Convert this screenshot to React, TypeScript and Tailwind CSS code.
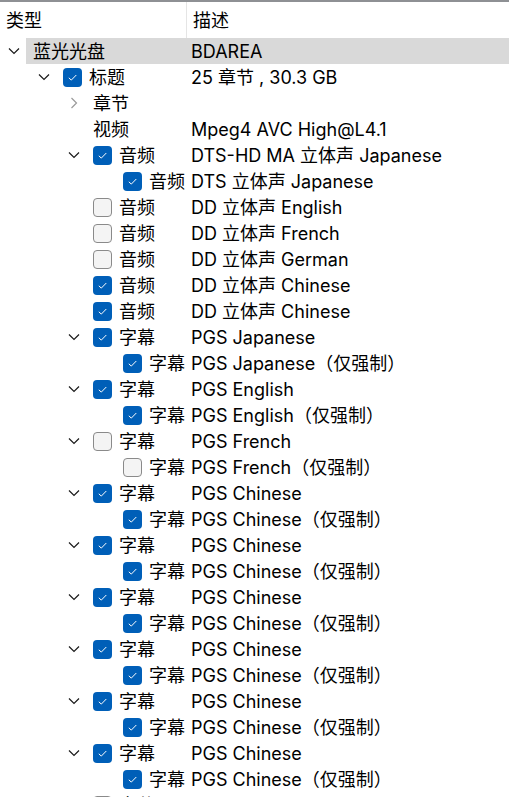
import React from "react";

type Row = {
  level: number;
  chev?: "down" | "right";
  cb?: "on" | "off";
  label: string;
  desc: string;
  hl?: boolean;
};

const rows: Row[] = [
  { level: 0, chev: "down", label: "蓝光光盘", desc: "BDAREA", hl: true },
  { level: 1, chev: "down", cb: "on", label: "标题", desc: "25 章节 , 30.3 GB" },
  { level: 2, chev: "right", label: "章节", desc: "" },
  { level: 2, label: "视频", desc: "Mpeg4 AVC High@L4.1" },
  { level: 2, chev: "down", cb: "on", label: "音频", desc: "DTS-HD MA 立体声 Japanese" },
  { level: 3, cb: "on", label: "音频", desc: "DTS 立体声 Japanese" },
  { level: 2, cb: "off", label: "音频", desc: "DD 立体声 English" },
  { level: 2, cb: "off", label: "音频", desc: "DD 立体声 French" },
  { level: 2, cb: "off", label: "音频", desc: "DD 立体声 German" },
  { level: 2, cb: "on", label: "音频", desc: "DD 立体声 Chinese" },
  { level: 2, cb: "on", label: "音频", desc: "DD 立体声 Chinese" },
  { level: 2, chev: "down", cb: "on", label: "字幕", desc: "PGS Japanese" },
  { level: 3, cb: "on", label: "字幕", desc: "PGS Japanese（仅强制）" },
  { level: 2, chev: "down", cb: "on", label: "字幕", desc: "PGS English" },
  { level: 3, cb: "on", label: "字幕", desc: "PGS English（仅强制）" },
  { level: 2, chev: "down", cb: "off", label: "字幕", desc: "PGS French" },
  { level: 3, cb: "off", label: "字幕", desc: "PGS French（仅强制）" },
  ...Array.from({ length: 6 }).flatMap(() => [
    { level: 2, chev: "down" as const, cb: "on" as const, label: "字幕", desc: "PGS Chinese" },
    { level: 3, cb: "on" as const, label: "字幕", desc: "PGS Chinese（仅强制）" },
  ]),
  { level: 2, chev: "down", cb: "off", label: "字幕", desc: "PGS Chinese" },
];

function ChevDown() {
  return (
    <svg width="12" height="8" viewBox="0 0 12 8" className="block">
      <path d="M1 1.5 L6 6.5 L11 1.5" fill="none" stroke="#1a1a1a" strokeWidth="1.2" />
    </svg>
  );
}

function ChevRight() {
  return (
    <svg width="8" height="12" viewBox="0 0 8 12" className="block">
      <path d="M1.5 1 L6.5 6 L1.5 11" fill="none" stroke="#9a9a9a" strokeWidth="1.2" />
    </svg>
  );
}

function Check({ on }: { on: boolean }) {
  if (on) {
    return (
      <div className="w-[19px] h-[19px] rounded-[4px] bg-[#005fb8] flex items-center justify-center shrink-0">
        <svg width="11" height="9" viewBox="0 0 11 9">
          <path d="M1.8 4.8 L4.3 7.1 L9.3 2" fill="none" stroke="#ffffff" strokeWidth="1" />
        </svg>
      </div>
    );
  }
  return <div className="w-[19px] h-[19px] rounded-[4px] bg-[#f4f4f4] border border-[#8a8a8a] shrink-0" />;
}

export default function App() {
  return (
    <div
      className="w-[509px] h-[797px] overflow-hidden bg-white text-black text-[18px] leading-none"
      style={{ fontFamily: 'Inter, "Noto Sans CJK SC", sans-serif' }}
    >
      <div className="h-[2px] bg-[#8e9094]" />
      <div className="flex h-[36px] items-center">
        <div className="w-[187px] pl-[6px] pt-[2px] border-r border-[#e5e5e5] h-full flex items-center">类型</div>
        <div className="pl-[6px] pt-[2px]">描述</div>
      </div>
      <div className="flex flex-col">
        {rows.map((r, i) => (
          <div key={i} className="flex h-[26px] items-center">
            <div className="w-[187px] h-full flex items-center shrink-0" style={{ paddingLeft: 30 * r.level }}>
              <div className="w-[28px] h-full flex items-center justify-center shrink-0">
                {r.chev === "down" ? <ChevDown /> : r.chev === "right" ? <ChevRight /> : null}
              </div>
              <div className={`flex items-center h-full grow ${r.hl ? "bg-[#d9d9d9] -ml-[2px] pl-[2px]" : ""}`}>
                {r.cb ? (
                  <div className="ml-[5px] mr-[7px]">
                    <Check on={r.cb === "on"} />
                  </div>
                ) : (
                  <div className="w-[5px]" />
                )}
                <span className="whitespace-nowrap pt-[2px]">{r.label}</span>
              </div>
            </div>
            <div className={`h-full flex items-center grow pl-[4px] pt-[2px] whitespace-nowrap ${r.hl ? "bg-[#d9d9d9]" : ""}`}>{r.desc}</div>
          </div>
        ))}
      </div>
    </div>
  );
}
